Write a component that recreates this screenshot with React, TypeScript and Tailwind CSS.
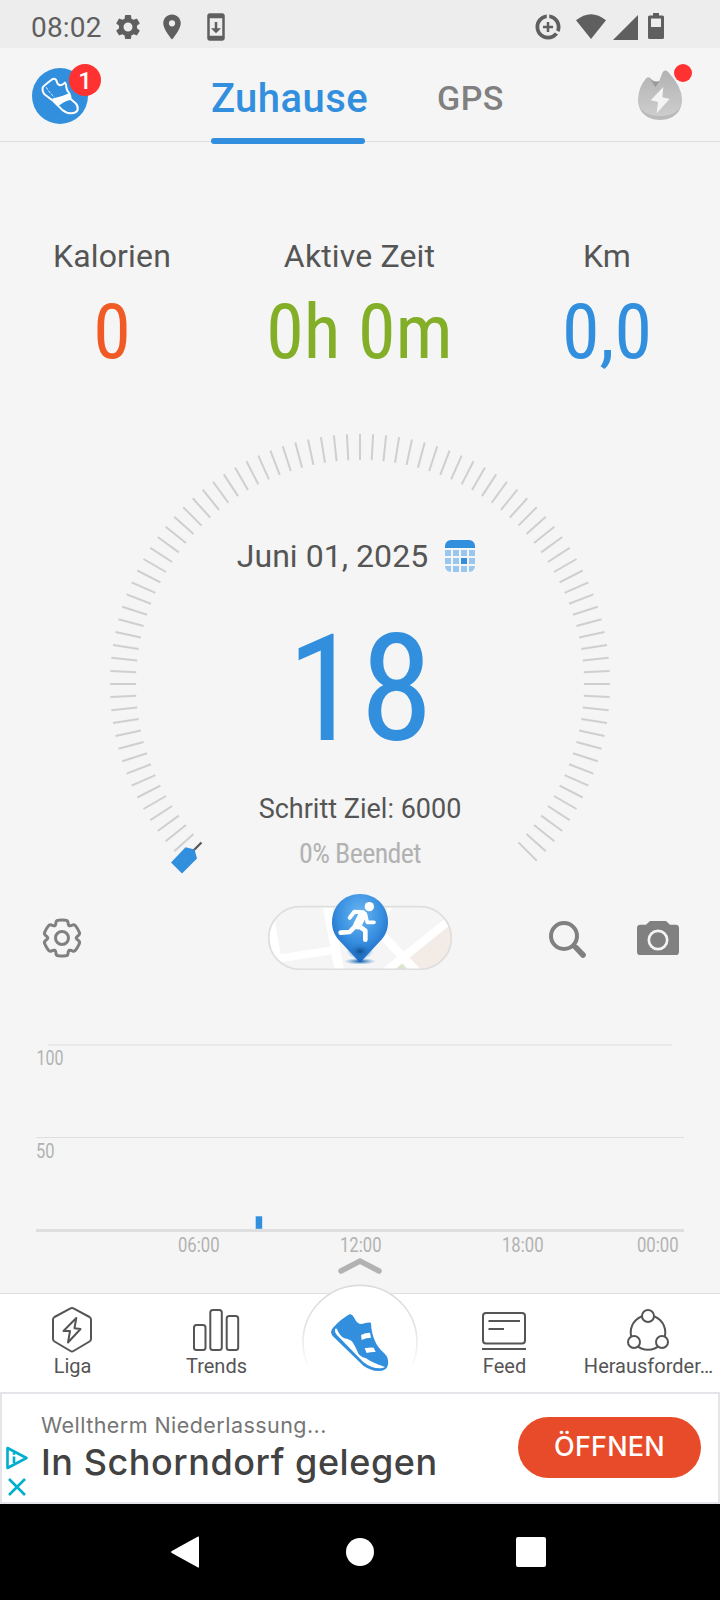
import type { ReactNode } from "react";
import { MdLocationOn, MdSettings, MdSystemUpdate } from "react-icons/md";

const stats = [
    { label: "Kalorien", value: "0", color: "text-[#f15a24]", width: "w-[224px]" },
    { label: "Aktive Zeit", value: "0h 0m", color: "text-[#83ae27]", width: "w-[271px]" },
    { label: "Km", value: "0,0", color: "text-[#328fde]", width: "w-[224px]" },
];

const hours = [
    { x: 178, label: "06:00" },
    { x: 340, label: "12:00" },
    { x: 502, label: "18:00" },
    { x: 637, label: "00:00" },
];

function StatusBar() {
    return (
        <div className="flex h-12 items-center bg-[#ededed] pt-1.5 pl-[31px] text-[#5f5f5f]">
            <span className="mt-0.5 text-[28px] leading-8 tracking-[0.2px]">08:02</span>
            <MdSettings className="ml-[11px] size-[30px]" />
            <MdLocationOn className="ml-3.5 size-[30px]" />
            <MdSystemUpdate className="ml-3.5 size-[30px]" />
            <svg className="ml-[302px] size-[30px]" viewBox="0 0 24 24" fill="currentColor">
                <path d="M11 8v3H8v2h3v3h2v-3h3v-2h-3V8h-2zm2-5.95v3.03c3.39.49 6 3.39 6 6.92 0 .9-.18 1.75-.48 2.54l2.6 1.53c.56-1.24.88-2.62.88-4.07 0-5.18-3.95-9.45-9-9.95zM12 19c-3.87 0-7-3.13-7-7 0-3.53 2.61-6.43 6-6.92V2.05c-5.06.5-9 4.76-9 9.95 0 5.52 4.47 10 9.99 10 3.31 0 6.24-1.61 8.06-4.09l-2.6-1.53C16.17 17.98 14.21 19 12 19z" />
            </svg>
            <svg className="ml-[13px] h-[30px] w-[30px]" viewBox="0 0 30 30" fill="currentColor">
                <path d="M0 8.2Q15-3.8 30 8.2L15 27z" />
            </svg>
            <svg className="ml-[7px] h-[30px] w-[25px]" viewBox="0 0 25 30" fill="currentColor">
                <path d="M25 3v25H0z" />
            </svg>
            <svg className="ml-[10px] h-[30px] w-4" viewBox="0 0 16 30" fill="currentColor">
                <path fillRule="evenodd" d="M5 1h6v2.500h3.500Q16 3.500 16 5v20.500Q16 27 14.500 27h-13Q0 27 0 25.500V5Q0 3.500 1.500 3.500H5zM3 6.500v8.500h10V6.500z" />
            </svg>
        </div>
    );
}

function Header() {
    return (
        <header className="flex h-[94px] border-b border-[#dedede]">
            <div className="relative mt-5 ml-8 size-14">
                <svg className="size-14" viewBox="96 204 168 168">
                    <circle cx="180" cy="288" r="84" fill="#328fde" />
                    <path
                        d="M158 237Q167 234 170 244Q173 256 182 256Q190 254 195 248Q199 252 199 262Q200 272 208 280Q211 286 212 297L226 309Q235 317 233 329Q229 340 214 340Q200 340 186 329L160 303L136 285Q126 277 128 262Q136 253 158 237z"
                        fill="none"
                        stroke="#fff"
                        strokeWidth="6"
                        strokeLinejoin="round"
                    />
                    <path d="M156 296Q184 291 209 279L213 299Q190 304 174 319z" fill="#fff" />
                    <path d="M139 262Q146 276 163 291" fill="none" stroke="#fff" strokeWidth="3" strokeDasharray="8 4" />
                </svg>
                <span className="absolute -top-1 left-[37px] flex size-8 items-center justify-center rounded-full bg-[#ff3131] pt-px text-2xl font-medium text-white">
                    1
                </span>
            </div>
            <nav className="ml-[123px] flex">
                <div className="flex w-[154px] flex-col items-center justify-between">
                    <span className="mt-[27px] ml-[3px] text-[40px] leading-[47px] font-medium tracking-[0.45px] whitespace-nowrap text-[#328fde]">Zuhause</span>
                    <span className="-mb-[3px] h-1.5 w-full shrink-0 rounded-full bg-[#328fde]" />
                </div>
                <span className="mt-[30px] ml-[72px] text-[34px] leading-10 font-medium tracking-[0.5px] text-[#808080]">GPS</span>
            </nav>
            <div className="relative mt-[22px] mr-[38px] ml-auto h-[50px] w-11">
                <svg className="h-[50px] w-11" viewBox="834 210 132 150">
                    <defs>
                        <linearGradient id="flame" x1="0" y1="0" x2="0" y2="1">
                            <stop offset="0" stopColor="#b2b2b2" />
                            <stop offset="1" stopColor="#cdcdcd" />
                        </linearGradient>
                    </defs>
                    <path d="M834 298C834 338 862 360 900 360S966 338 966 298z" fill="#bababa" />
                    <path
                        d="M859 234Q867 228 873 236Q880 247 890 247Q896 246 898 242L908 217Q914 207 924 215Q966 260 966 298C966 332 938 348 900 348S834 332 834 298Q835 262 859 234z"
                        fill="url(#flame)"
                    />
                    <path d="M869 233Q880 248 898 243L886 262z" fill="#999" />
                    <path d="M910 261L872 301L894 306L890 340L929 297L907 292z" fill="#f4f4f4" />
                </svg>
                <span className="absolute -top-1.5 left-9 size-[18px] rounded-full bg-[#ff3131]" />
            </div>
        </header>
    );
}

function Gauge() {
    const ticks = Array.from({ length: 90 }, (_, i) => -132 + i * 3);

    return (
        <section className="mt-[58px] grid h-[444px]">
            <svg className="[grid-area:1/1]" width="720" height="444" viewBox="0 434 720 444">
                {ticks.map((angle) => (
                    <line
                        key={angle}
                        x1="360"
                        y1="434"
                        x2="360"
                        y2="460"
                        stroke="#cfcfcf"
                        strokeWidth="2"
                        transform={`rotate(${angle} 360 684)`}
                    />
                ))}
                <path d="M201.500 842.500l-9 9" stroke="#555" strokeWidth="2.200" />
                <path d="M171 862.500L182 873.500L197 858.500L194.500 849.500L185.500 847.300z" fill="#328fde" />
            </svg>
            <div className="flex flex-col items-center pt-[103px] [grid-area:1/1]">
                <div className="flex gap-[17px] pr-2">
                    <span className="text-[32px] leading-[38px] tracking-[0.05px] text-[#555]">Juni 01, 2025</span>
                    <svg className="mt-[3px]" width="30" height="32" viewBox="0 0 30 32">
                        <clipPath id="cal">
                            <rect width="30" height="32" rx="6" />
                        </clipPath>
                        <g clipPath="url(#cal)" fill="#98c6ee">
                            <rect width="30" height="8" fill="#328fde" />
                            {[10, 18, 26].map((y) =>
                                [0, 8, 16, 24].map((x) => (
                                    <rect key={`${x}-${y}`} x={x} y={y} width="6" height="6" fill={x === 16 && y === 18 ? "#328fde" : undefined} />
                                ))
                            )}
                        </g>
                    </svg>
                </div>
                <span className="mt-[41px] text-[148px] leading-[148px] text-[#328fde] [font-stretch:75%]">18</span>
                <span className="mt-[29px] text-[27px] leading-8 text-[#555]">Schritt Ziel: 6000</span>
                <span className="mt-[13px] text-[28px] leading-8 tracking-[-0.65px] text-[#b2b2b2] [font-stretch:75%]">0% Beendet</span>
            </div>
        </section>
    );
}

function MapPill() {
    return (
        <svg width="184" height="76" viewBox="54 42 552 228">
            <defs>
                <clipPath id="pill">
                    <rect x="56" y="80" width="548" height="188" rx="94" />
                </clipPath>
                <radialGradient id="pin" cx="0.5" cy="0.3" r="0.65">
                    <stop offset="0" stopColor="#6ab6f3" />
                    <stop offset="0.6" stopColor="#3990e0" />
                    <stop offset="1" stopColor="#1c68c4" />
                </radialGradient>
                <radialGradient id="shade">
                    <stop offset="0" stopColor="#0b4f8f" />
                    <stop offset="1" stopColor="#3990e0" stopOpacity="0" />
                </radialGradient>
            </defs>
            <g clipPath="url(#pill)">
                <path d="M606 132L478 235L510 270H606z" fill="#f3ebe6" />
                <path d="M436 270L455 250L473 270z" fill="#dce8cb" />
                <g fill="none" stroke="#fff" strokeWidth="24">
                    <path d="M62 120L82 236L246 211" />
                    <path d="M232 76L268 272" strokeWidth="28" />
                    <path d="M380 148L502 276" strokeWidth="26" />
                    <path d="M604 116L400 280" />
                    <path d="M424 78L404 108" strokeWidth="10" />
                </g>
            </g>
            <rect x="56" y="80" width="548" height="188" rx="94" fill="none" stroke="#dedede" strokeWidth="5" />
            <ellipse cx="330" cy="244" rx="48" ry="10" fill="url(#shade)" />
            <path d="M330 42C378 42 414 79 414 126C414 150 405 168 390 184L330 248L270 184C255 168 246 150 246 126C246 79 282 42 330 42z" fill="url(#pin)" />
            <ellipse cx="330" cy="214" rx="40" ry="26" fill="url(#shade)" />
            <circle cx="358" cy="80" r="14" fill="#fff" />
            <g fill="none" stroke="#fff" strokeLinecap="round" strokeLinejoin="round" strokeWidth="12">
                <path d="M299 113L313 95L340 97" />
                <path d="M346 102L352 127L372 127" strokeWidth="11" />
                <path d="M338 104L322 136" strokeWidth="25" />
                <path d="M318 136L299 156L272 158" strokeWidth="14" />
                <path d="M326 138L346 152V179" strokeWidth="14" />
            </g>
        </svg>
    );
}

function Tools() {
    return (
        <section className="mt-3 flex h-24 items-center pl-[42px] text-[#808080]">
            <svg width="40" height="40" viewBox="66 114 120 120" fill="none" stroke="currentColor" strokeWidth="9" strokeLinecap="round">
                {[0, 60, 120, 180, 240, 300].map((angle) => (
                    <path
                        key={angle}
                        d="M104.500 137Q108 134 108 127Q109 121 115 120.500Q126 119 137 120.500Q143 121 144 127Q144 134 147.500 137"
                        transform={`rotate(${angle} 126 174)`}
                    />
                ))}
                <circle cx="126" cy="174" r="19.500" />
            </svg>
            <div className="mt-1 ml-[186px] self-start">
                <MapPill />
            </div>
            <svg className="ml-24" width="40" height="40" viewBox="84 114 120 120" fill="none" stroke="currentColor">
                <circle cx="132" cy="168" r="39" strokeWidth="12" />
                <path d="M161 196L168 203" strokeWidth="13" />
                <path d="M168 203L189 225" strokeWidth="17" strokeLinecap="round" />
            </svg>
            <svg className="ml-[49px]" width="42" height="34" viewBox="351 123 126 102">
                <path
                    d="M390 123H438L450 134H467Q477 134 477 144V215Q477 225 467 225H361Q351 225 351 215V144Q351 134 361 134H378z"
                    fill="currentColor"
                />
                <circle cx="414" cy="180" r="27.500" fill="none" stroke="#f4f4f4" strokeWidth="8" />
            </svg>
        </section>
    );
}

function Chart() {
    return (
        <svg className="block" width="720" height="307" viewBox="0 986 720 307">
            <path d="M48 1045.200Q51 1044.800 54 1044.800H666Q669 1044.800 672 1045.200" fill="none" stroke="#e8e8e8" strokeWidth="1.800" />
            <path d="M36 1137.500H684" stroke="#dedede" strokeWidth="1" />
            <path d="M36 1230.500H684" stroke="#dedede" strokeWidth="3" />
            <rect x="255.700" y="1216.300" width="6.500" height="12.500" fill="#328fde" />
            <g fill="#b2b2b2" fontSize="20">
                <text x="36.500" y="1065" textLength="27" lengthAdjust="spacingAndGlyphs">100</text>
                <text x="36" y="1158" textLength="18.500" lengthAdjust="spacingAndGlyphs">50</text>
                {hours.map((hour) => (
                    <text key={hour.label} x={hour.x} y="1252" textLength="41.500" lengthAdjust="spacingAndGlyphs">
                        {hour.label}
                    </text>
                ))}
            </g>
            <path d="M341 1271L360 1261L379 1271" fill="none" stroke="#b2b2b2" strokeWidth="5.500" strokeLinecap="round" />
        </svg>
    );
}

function NavItem({ label, children }: { label: string; children: ReactNode }) {
    return (
        <div className="flex w-36 flex-col items-center pt-2.5">
            <svg width="48" height="52" viewBox="0 0 48 52" fill="none" stroke="#555" strokeWidth="2" strokeLinejoin="round">
                {children}
            </svg>
            <span className="-mt-0.5 ml-px text-xl leading-6 whitespace-nowrap text-[#555]">{label}</span>
        </div>
    );
}

function BottomNav() {
    return (
        <nav className="relative flex h-[99px] border-t border-[#dedede] bg-white">
            <NavItem label="Liga">
                <path d="M22.500 4.300Q24 3.500 25.500 4.300L41.500 13Q43 14 43 15.500V35Q43 36.500 41.500 37.500L25.500 47Q24 48 22.500 47L6.500 37.500Q5 36.500 5 35V15.500Q5 14 6.500 13z" />
                <path d="M28.300 14L15.500 27H22L20 38.500L32.500 25L26.500 24.200z" />
            </NavItem>
            <NavItem label="Trends">
                <rect x="2" y="21" width="11.500" height="25" rx="2.500" />
                <rect x="18.300" y="6" width="11.500" height="40" rx="2.500" />
                <rect x="34.700" y="12" width="11.500" height="34" rx="2.500" />
            </NavItem>
            <div className="w-36">
                <svg className="absolute -top-2.5 left-[301px]" width="118" height="107" viewBox="903 129 354 321">
                    <defs>
                        <linearGradient id="ring" x1="0" y1="0" x2="0" y2="1">
                            <stop offset="0" stopColor="#dcdcdc" />
                            <stop offset="0.350" stopColor="#e2e2e2" />
                            <stop offset="0.750" stopColor="#fff" />
                        </linearGradient>
                    </defs>
                    <circle cx="1080" cy="304" r="171" fill="#fff" stroke="url(#ring)" strokeWidth="5" />
                    <path
                        d="M1050 219Q1058 221 1063 231Q1072 250 1085 249Q1100 243 1113 245Q1114 276 1125 300Q1133 320 1152 336Q1168 351 1164 371Q1160 390 1135 390Q1112 389 1090 374L998 285Q988 273 999 260Q1025 232 1050 219z"
                        fill="#328fde"
                    />
                    <path
                        d="M1005 265Q1003 273 1010 281L1089 362Q1115 383 1142 382Q1152 381 1155 378Q1118 366 1098 352Q1083 348 1076 340Q1063 309 1055 300Q1043 293 1033 292Q1018 284 1011 264Q1007 261 1005 265z"
                        fill="#fff"
                    />
                    <path d="M1083 282Q1096 275 1110 275L1113 290Q1099 290 1085 297z" fill="#fff" />
                    <path d="M1094 322Q1108 319 1121 320L1127 333Q1114 332 1100 336z" fill="#fff" />
                </svg>
            </div>
            <NavItem label="Feed">
                <rect x="3" y="9" width="42" height="30.500" rx="3" />
                <path d="M8.500 17H40M8.500 25H24M2 45H46" />
            </NavItem>
            <NavItem label="Herausforder…">
                <circle cx="24" cy="28.500" r="17.300" />
                <g fill="#fff">
                    <circle cx="24" cy="12" r="6" />
                    <circle cx="10" cy="38" r="6" />
                    <circle cx="38" cy="38" r="6" />
                </g>
            </NavItem>
        </nav>
    );
}

function AdBanner() {
    return (
        <aside className="flex h-28 items-center border-2 border-[#e4e5e8] bg-white font-[Inter,sans-serif]">
            <div className="mt-[45px] ml-1 flex w-[22px] shrink-0 flex-col items-center gap-2">
                <svg width="22" height="24" viewBox="0 0 22 24" fill="none" stroke="#00aecd" strokeWidth="2.600" strokeLinejoin="round">
                    <path d="M1.500 2V22L20.500 12z" />
                    <path d="M8 10.500V17M8 6.500V8.700" />
                </svg>
                <svg width="18" height="18" viewBox="0 0 18 18" stroke="#00aecd" strokeWidth="2.600">
                    <path d="M1 1L17 17M17 1L1 17" />
                </svg>
            </div>
            <div className="mb-0.5 ml-[13px] flex flex-1 flex-col whitespace-nowrap">
                <span className="text-[21.5px] leading-7 tracking-[0.45px] text-[#757575]">Welltherm Niederlassung...</span>
                <span className="mt-px text-[36px] leading-11 font-medium tracking-[0.55px] text-[#424242]">In Schorndorf gelegen</span>
            </div>
            <div className="mr-[17px] mb-px flex h-[61px] w-[183px] items-center justify-center rounded-full bg-[#e84b29] pb-px text-[27px] font-medium tracking-[0.2px] text-white">
                ÖFFNEN
            </div>
        </aside>
    );
}

function SystemNav() {
    return (
        <div className="flex h-24 items-center justify-center bg-black pr-0.5">
            <svg width="376" height="32" viewBox="0 0 376 32" fill="#fff">
                <path d="M27 .500Q28 0 28 1.500V30.500Q28 32 27 31.500L.800 17Q-.500 16 .800 15z" />
                <circle cx="189" cy="16" r="14" />
                <rect x="345" y="1" width="30" height="30" rx="2" />
            </svg>
        </div>
    );
}

export default function App() {
    return (
        <div className="flex h-[1600px] w-[720px] flex-col overflow-hidden bg-[#f5f5f5] font-[Roboto,sans-serif]">
            <StatusBar />
            <Header />
            <section className="flex pt-[95px] text-center">
                {stats.map((stat) => (
                    <div key={stat.label} className={`flex flex-col ${stat.width}`}>
                        <span className="text-[32px] leading-[38px] tracking-[0.15px] text-[#555]">{stat.label}</span>
                        <span className={`mt-[13px] text-[76px] leading-[88px] [font-stretch:75%] ${stat.color}`}>{stat.value}</span>
                    </div>
                ))}
            </section>
            <Gauge />
            <Tools />
            <Chart />
            <BottomNav />
            <AdBanner />
            <SystemNav />
        </div>
    );
}
